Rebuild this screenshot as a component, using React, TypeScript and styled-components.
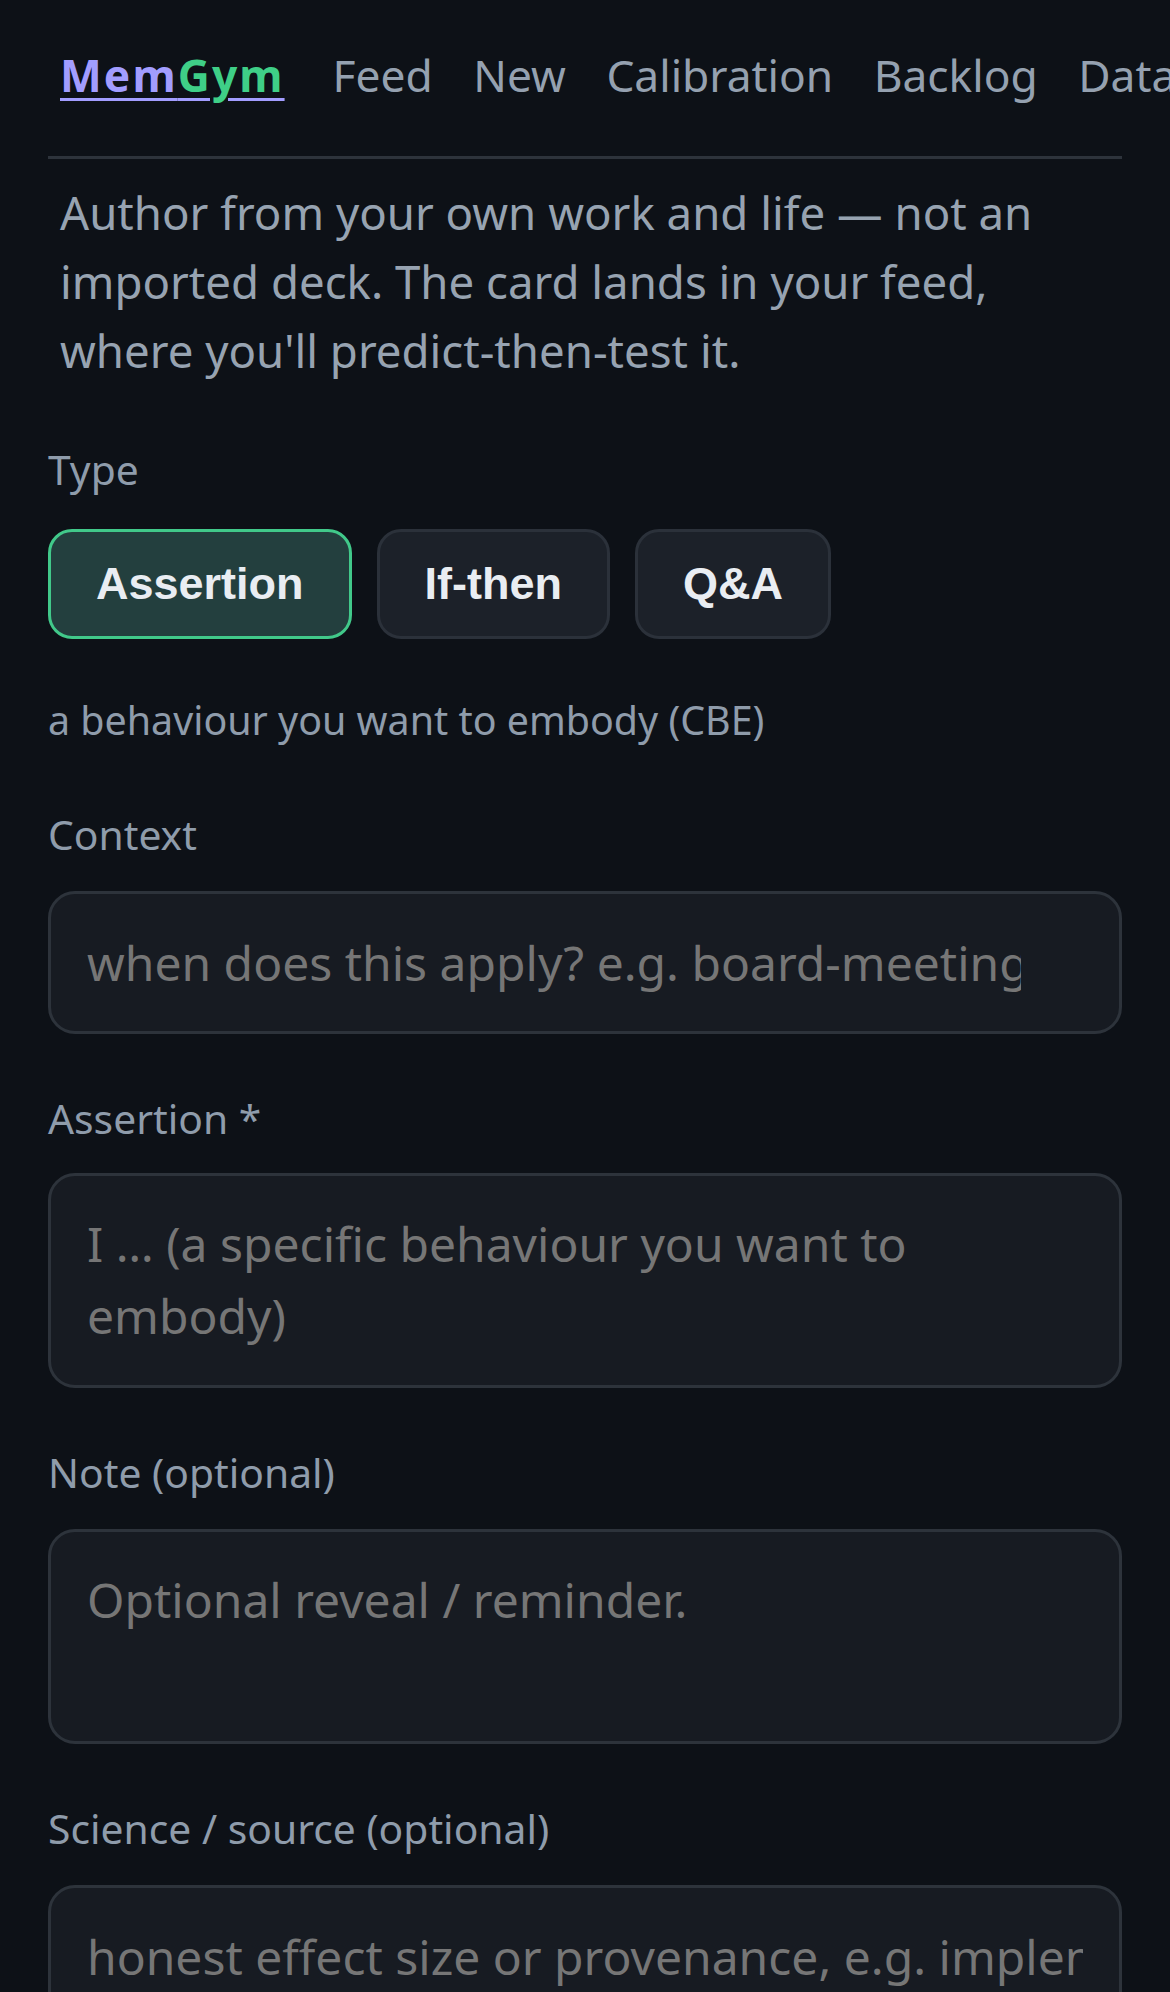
import { useState } from "react";
import styled, { createGlobalStyle } from "styled-components";

type CardType = "assertion" | "ifthen" | "qa";

const TYPES: { id: CardType; label: string; hint: string; main: string; placeholder: string }[] = [
  {
    id: "assertion",
    label: "Assertion",
    hint: "a behaviour you want to embody (CBE)",
    main: "Assertion *",
    placeholder: "I … (a specific behaviour you want to embody)",
  },
  {
    id: "ifthen",
    label: "If-then",
    hint: "a trigger and the response you want to rehearse",
    main: "If-then *",
    placeholder: "If … then I …",
  },
  {
    id: "qa",
    label: "Q&A",
    hint: "a question with an answer you want to recall",
    main: "Question *",
    placeholder: "What … ?",
  },
];

const NAV_LINKS = ["Feed", "New", "Calibration", "Backlog", "Data", "Settings"];

const GlobalStyle = createGlobalStyle`
  * { box-sizing: border-box; }
  html, body {
    margin: 0;
    padding: 0;
    background: #0d1117;
    scrollbar-width: none;
  }
  body {
    font-family: "Noto Sans", "Open Sans", sans-serif;
    color: #e6edf3;
    overflow-x: hidden;
  }
  ::-webkit-scrollbar { display: none; }
`;

const Page = styled.main`
  padding: 0 48px;
`;

const Header = styled.header`
  padding: 42px 12px 46.5px;
  border-bottom: 3px solid #2d333b;
`;

const Nav = styled.nav`
  display: flex;
  align-items: center;
  gap: 40.5px;
  white-space: nowrap;
  font-size: 44.3px;
  line-height: 67.5px;
`;

const Brand = styled.a`
  flex-shrink: 0;
  margin-right: 7.5px;
  font-weight: 700;
  letter-spacing: 2.1px;
  color: #a29dff;
  text-decoration: underline;
  text-decoration-thickness: 3px;
  text-underline-offset: 6px;
`;

const BrandAccent = styled.span`
  color: #3fcf87;
`;

const NavLink = styled.a`
  flex-shrink: 0;
  color: #95a1b0;
  text-decoration: none;
`;

const Intro = styled.p`
  margin: 19px 0 0;
  padding: 0 12px;
  font-size: 45.6px;
  line-height: 69px;
  color: #97a3b1;
`;

const Form = styled.form`
  display: flex;
  flex-direction: column;
  gap: 54px;
  margin-top: 54px;
`;

const Field = styled.div<{ $gap?: number }>`
  display: flex;
  flex-direction: column;
  gap: ${(p) => p.$gap ?? 27}px;
`;

const Label = styled.label`
  font-size: 40.8px;
  line-height: 60px;
  color: #8f9cab;
`;

const Hint = styled.p`
  margin: -3px 0 0;
  font-size: 39.4px;
  line-height: 60px;
  color: #8f9cab;
`;

const TypeRow = styled.div`
  display: flex;
  gap: 25px;
`;

const TypeButton = styled.button<{ $active: boolean }>`
  font-family: "Liberation Sans", Arial, sans-serif;
  font-weight: 700;
  font-size: 45px;
  line-height: 52px;
  padding: 26px 45px;
  border-radius: 24px;
  border: 3px solid ${(p) => (p.$active ? "#41c98a" : "#2b313a")};
  background: ${(p) => (p.$active ? "#233f3e" : "#1c2129")};
  color: #e9edf2;
  cursor: pointer;
`;

const Input = styled.input<{ $padRight?: number }>`
  width: 100%;
  height: 143px;
  padding: 0 ${(p) => p.$padRight ?? 36}px 0 36px;
  font-family: inherit;
  font-size: 48px;
  line-height: 72px;
  color: #e6edf3;
  background: #171b22;
  border: 3px solid #2d333b;
  border-radius: 27px;
  outline: none;

  &::placeholder {
    color: #767676;
  }
`;

const TextArea = styled.textarea`
  display: block;
  width: 100%;
  height: 215px;
  padding: 32px 36px;
  font-family: inherit;
  font-size: 48px;
  line-height: 72px;
  color: #e6edf3;
  background: #171b22;
  border: 3px solid #2d333b;
  border-radius: 27px;
  outline: none;
  resize: none;

  &::placeholder {
    color: #767676;
  }
`;

export default function App() {
  const [type, setType] = useState<CardType>("assertion");
  const current = TYPES.find((t) => t.id === type)!;

  return (
    <>
      <GlobalStyle />
      <Page>
        <Header>
          <Nav>
            <Brand href="#">
              Mem<BrandAccent>Gym</BrandAccent>
            </Brand>
            {NAV_LINKS.map((link) => (
              <NavLink key={link} href="#">
                {link}
              </NavLink>
            ))}
          </Nav>
        </Header>

        <Intro>
          Author from your own work and life — not an imported deck. The card lands in your feed,
          where you'll predict-then-test it.
        </Intro>

        <Form onSubmit={(e) => e.preventDefault()}>
          <Field $gap={30}>
            <Label>Type</Label>
            <TypeRow>
              {TYPES.map((t) => (
                <TypeButton
                  key={t.id}
                  type="button"
                  $active={t.id === type}
                  onClick={() => setType(t.id)}
                >
                  {t.label}
                </TypeButton>
              ))}
            </TypeRow>
          </Field>

          <Hint>{current.hint}</Hint>

          <Field>
            <Label htmlFor="context">Context</Label>
            <Input
              id="context"
              $padRight={98}
              placeholder="when does this apply? e.g. board-meeting, 1:1s, deep work"
            />
          </Field>

          <Field $gap={25}>
            <Label htmlFor="main">{current.main}</Label>
            <TextArea id="main" rows={2} placeholder={current.placeholder} />
          </Field>

          <Field>
            <Label htmlFor="note">Note (optional)</Label>
            <TextArea id="note" rows={2} placeholder="Optional reveal / reminder." />
          </Field>

          <Field>
            <Label htmlFor="source">Science / source (optional)</Label>
            <Input
              id="source"
              placeholder="honest effect size or provenance, e.g. implementation intentions d≈0.65"
            />
          </Field>
        </Form>
      </Page>
    </>
  );
}
